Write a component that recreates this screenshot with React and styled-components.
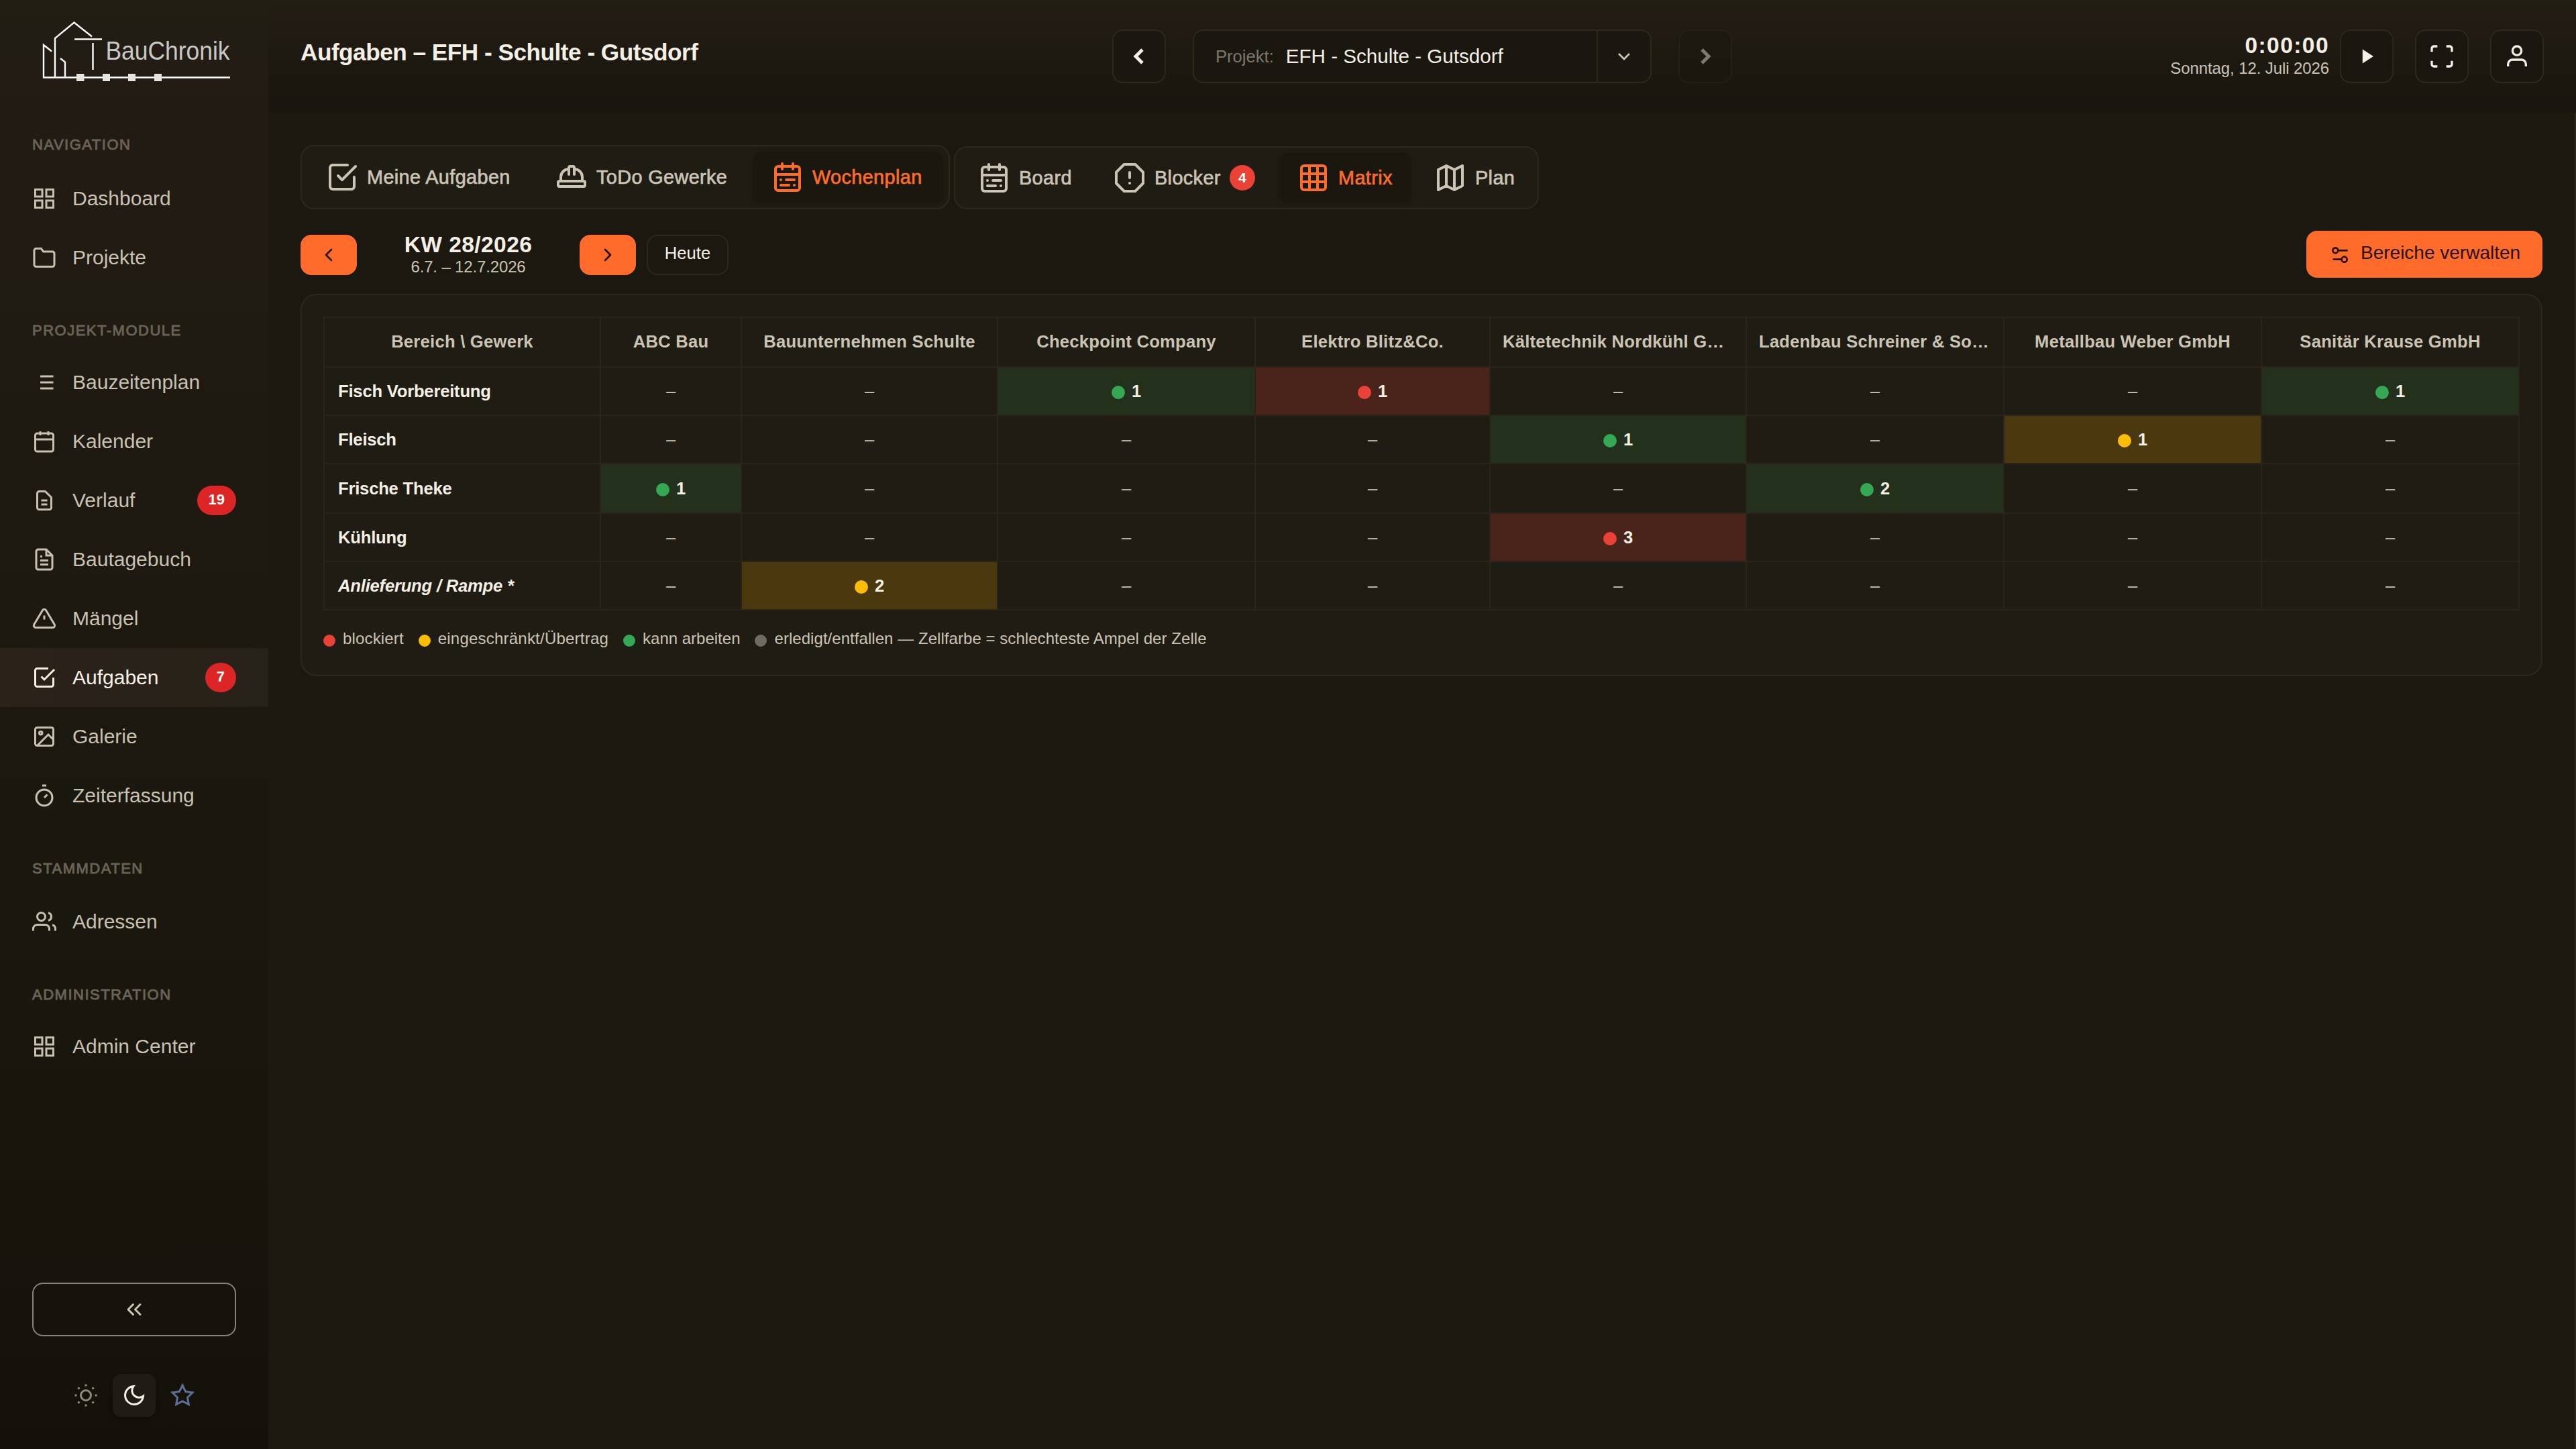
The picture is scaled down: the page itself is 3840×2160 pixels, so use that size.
import React from 'react'
import styled, { createGlobalStyle } from 'styled-components'

const GlobalStyle = createGlobalStyle`
  * { box-sizing: border-box; }
  body {
    margin: 0;
    background: #1b1810;
    color: #cbc4b5;
    font-family: "Liberation Sans", Arial, sans-serif;
    overflow: hidden;
  }
`

const ICONS = {
  grid: <><rect x="3" y="3" width="7" height="7" /><rect x="14" y="3" width="7" height="7" /><rect x="14" y="14" width="7" height="7" /><rect x="3" y="14" width="7" height="7" /></>,
  folder: <path d="M22 19a2 2 0 0 1-2 2H4a2 2 0 0 1-2-2V5a2 2 0 0 1 2-2h5l2 3h9a2 2 0 0 1 2 2z" />,
  list: <path d="M8 6h13M8 12h13M8 18h13" />,
  calendar: <><rect x="3" y="4" width="18" height="18" rx="2" /><path d="M16 2v4M8 2v4M3 10h18" /></>,
  doc: <path d="M9 12h6m-6 4h6m2 5H7a2 2 0 01-2-2V5a2 2 0 012-2h5.586a1 1 0 01.707.293l5.414 5.414a1 1 0 01.293.707V19a2 2 0 01-2 2z" />,
  fileText: <path d="M14 2H6a2 2 0 0 0-2 2v16a2 2 0 0 0 2 2h12a2 2 0 0 0 2-2V8zM14 2v6h6M16 13H8M16 17H8M10 9H8" />,
  alert: <path d="M10.29 3.86L1.82 18a2 2 0 0 0 1.71 3h16.94a2 2 0 0 0 1.71-3L13.71 3.86a2 2 0 0 0-3.42 0zM12 9v4" />,
  check: <path d="M9 11l3 3L22 4M21 12v7a2 2 0 0 1-2 2H5a2 2 0 0 1-2-2V5a2 2 0 0 1 2-2h11" />,
  image: <><rect x="3" y="3" width="18" height="18" rx="2" /><circle cx="8.5" cy="8.5" r="1.5" /><path d="M21 15l-5-5L5 21" /></>,
  timer: <><path d="M10 2h4M12 14l3-3" /><circle cx="12" cy="14" r="8" /></>,
  users: <><path d="M17 21v-2a4 4 0 0 0-4-4H5a4 4 0 0 0-4 4v2" /><circle cx="9" cy="7" r="4" /><path d="M23 21v-2a4 4 0 0 0-3-3.87M16 3.13a4 4 0 0 1 0 7.75" /></>,
  chevronsLeft: <path d="M11 17l-5-5 5-5M18 17l-5-5 5-5" />,
  sun: <><circle cx="12" cy="12" r="5" /><path d="M12 1v2M12 21v2M4.22 4.22l1.42 1.42M18.36 18.36l1.42 1.42M1 12h2M21 12h2M4.22 19.78l1.42-1.42M18.36 5.64l1.42-1.42" /></>,
  moon: <path d="M21 12.79A9 9 0 1 1 11.21 3 7 7 0 0 0 21 12.79z" />,
  star: <path d="M12 2l3.09 6.26L22 9.27l-5 4.87 1.18 6.88L12 17.77l-6.18 3.25L7 14.14 2 9.27l6.91-1.01z" />,
  left: <path d="M15 18l-6-6 6-6" />,
  right: <path d="M9 18l6-6-6-6" />,
  down: <path d="M6 9l6 6 6-6" />,
  play: <path d="M8.3 5.7v12.6L18 12z" fill="currentColor" stroke="none" />,
  maximize: <path d="M8 3H5a2 2 0 0 0-2 2v3M21 8V5a2 2 0 0 0-2-2h-3M16 21h3a2 2 0 0 0 2-2v-3M3 16v3a2 2 0 0 0 2 2h3" />,
  user: <><path d="M20 21v-2a4 4 0 0 0-4-4H8a4 4 0 0 0-4 4v2" /><circle cx="12" cy="7" r="4" /></>,
  hat: <path d="M2 18a1 1 0 0 0 1 1h18a1 1 0 0 0 1-1v-2a1 1 0 0 0-1-1H3a1 1 0 0 0-1 1zM10 10V5a1 1 0 0 1 1-1h2a1 1 0 0 1 1 1v5M4 15v-3a6 6 0 0 1 6-6M14 6a6 6 0 0 1 6 6v3" />,
  calendarRange: <><rect x="3" y="4" width="18" height="18" rx="2" /><path d="M16 2v4M8 2v4M3 10h18M17 14h-6M13 18H7M7 14h.01M17 18h.01" /></>,
  octagon: <path d="M7.86 2h8.28L22 7.86v8.28L16.14 22H7.86L2 16.14V7.86zM12 8v4M12 16h.01" />,
  matrix: <><rect x="3" y="3" width="18" height="18" rx="2" /><path d="M3 9h18M3 15h18M9 3v18M15 3v18" /></>,
  map: <path d="M3 6l6-3 6 3 6-3v15l-6 3-6-3-6 3zM9 3v15M15 6v15" />,
  settings: <><path d="M20 7h-9M14 17H5" /><circle cx="17" cy="17" r="3" /><circle cx="7" cy="7" r="3" /></>,
}

const Svg = styled.svg`
  display: block;
  flex: none;
  width: ${({ $size }) => $size}px;
  height: ${({ $size }) => $size}px;
  fill: none;
  stroke: currentColor;
`

const Icon = ({ name, size = 36, weight = 2, round }) => (
  <Svg
    viewBox="0 0 24 24"
    $size={size}
    strokeWidth={weight}
    strokeLinecap={round ? 'round' : 'butt'}
    strokeLinejoin={round ? 'round' : 'miter'}
  >
    {ICONS[name]}
  </Svg>
)

const Page = styled.div`
  display: flex;
  width: 3840px;
  height: 2160px;
`

const Sidebar = styled.aside`
  width: 400px;
  flex: none;
  display: flex;
  flex-direction: column;
  background: linear-gradient(180deg, #221e14 0%, #221b14 8%, #1e1a12 28%, #1a170e 65%, #15130b 92%, #14100a 100%);
`

const Logo = styled.svg`
  display: block;
  flex: none;
  width: 400px;
  height: 151px;
`

const Section = styled.div`
  height: ${({ $height }) => $height || 98}px;
  padding: 49px 0 0 48px;
  font-size: 22px;
  line-height: 32px;
  letter-spacing: 1.5px;
  color: #696355;
  -webkit-text-stroke: 0.9px #696355;
`

const NavItem = styled.div`
  height: 88px;
  display: flex;
  align-items: center;
  gap: 24px;
  padding: 0 48px;
  font-size: 30px;
  color: ${({ $active }) => $active ? '#f5f0e6' : '#c8c1b2'};
  background: ${({ $active }) => $active ? 'linear-gradient(90deg, #2b221a, #272219)' : 'none'};
`

const NavBadge = styled.span`
  margin-left: auto;
  height: 44px;
  padding: 0 17px;
  border-radius: 22px;
  background: #dc2626;
  color: #fff;
  font-size: 22px;
  font-weight: 700;
  line-height: 42px;
`

const Collapse = styled.div`
  margin: auto 48px 0;
  height: 80px;
  border: 2px solid #85837c;
  border-radius: 16px;
  display: flex;
  align-items: center;
  justify-content: center;
`

const Themes = styled.div`
  display: flex;
  justify-content: center;
  gap: 8px;
  margin: 56px 0 48px;
`

const ThemeButton = styled.div`
  width: 64px;
  height: 64px;
  border-radius: 12px;
  display: flex;
  align-items: center;
  justify-content: center;
  color: ${({ $color }) => $color};
  background: ${({ $active }) => $active ? '#1f1c15' : 'none'};
  box-shadow: ${({ $active }) => $active ? '0 2px 6px rgba(0,0,0,0.3)' : 'none'};
`

const Main = styled.main`
  flex: 1;
  min-width: 0;
  display: flex;
  flex-direction: column;
`

const Header = styled.header`
  height: 168px;
  flex: none;
  display: grid;
  grid-template-columns: 1fr 924px 1fr;
  align-items: start;
  padding: 44px 48px 0;
  background: linear-gradient(180deg, #221e13 0, #221b14 36px, #1e1a12 70px, #1b1810 110px, #19160f 168px);
`

const Title = styled.h1`
  margin: 14px 0 0;
  font-size: 35.2px;
  line-height: 40px;
  letter-spacing: -0.5px;
  color: #f5f0e6;
`

const ProjectNav = styled.div`
  display: flex;
  gap: 40px;
  height: 80px;
`

const Square = styled.div`
  width: 80px;
  height: 80px;
  flex: none;
  border: 2px solid #2c291c;
  border-radius: 16px;
  background: #19170f;
  color: #f5f0e6;
  display: flex;
  align-items: center;
  justify-content: center;
  opacity: ${({ $dim }) => $dim ? 0.45 : 1};
`

const Select = styled.div`
  flex: 1;
  display: flex;
  border: 2px solid #2c291c;
  border-radius: 16px;
  background: #19170f;
`

const SelectValue = styled.div`
  flex: 1;
  display: flex;
  align-items: center;
  padding-left: 32px;
  gap: 18px;
  font-size: 29.6px;
  color: #f5f0e6;
`

const SelectLabel = styled.span`
  font-size: 25.6px;
  color: #7c776a;
`

const SelectArrow = styled.div`
  width: 80px;
  border-left: 2px solid #2c291c;
  display: flex;
  align-items: center;
  justify-content: center;
`

const HeaderRight = styled.div`
  display: flex;
  justify-content: flex-end;
  gap: 32px;
`

const Clock = styled.div`
  margin-right: -16px;
  padding-top: 6px;
  text-align: right;
`

const Time = styled.div`
  font-size: 33.6px;
  font-weight: 700;
  line-height: 36px;
  letter-spacing: 1.4px;
  color: #f5f0e6;
`

const DateLine = styled.div`
  font-size: 24px;
  line-height: 32px;
  letter-spacing: -0.1px;
`

const Content = styled.div`
  flex: 1;
  padding: 48px 48px 0;
  border-right: 2px solid #2a2718;
`

const TabBars = styled.div`
  display: flex;
  align-items: flex-end;
  gap: 6px;
`

const TabBar = styled.div`
  display: flex;
  gap: 8px;
  height: ${({ $height }) => $height}px;
  padding: 8px;
  border: 2px solid #2c291b;
  border-radius: 20px;
  background: #1f1c13;
`

const Tab = styled.div`
  width: ${({ $width }) => $width}px;
  padding-left: ${({ $pad }) => $pad}px;
  display: flex;
  align-items: center;
  gap: 13px;
  border-radius: 12px;
  font-size: 28.8px;
  letter-spacing: 0.4px;
  white-space: nowrap;
  color: ${({ $active }) => $active ? '#ff6b2b' : '#cbc4b5'};
  background: ${({ $active }) => $active ? '#1a170f' : 'none'};
  box-shadow: ${({ $active }) => $active ? '0 2px 8px rgba(0,0,0,0.12)' : 'none'};
  -webkit-text-stroke: 0.7px currentColor;
`

const Count = styled.span`
  width: 38px;
  height: 38px;
  border-radius: 50%;
  background: #ea4335;
  color: #fff;
  font-size: 21px;
  font-weight: 700;
  line-height: 38px;
  text-align: center;
  letter-spacing: 0;
  -webkit-text-stroke: 0;
`

const WeekRow = styled.div`
  display: flex;
  align-items: center;
  gap: 16px;
  height: 70px;
  margin-top: 32px;
`

const WeekButton = styled.div`
  width: 84px;
  height: 60px;
  margin-top: 2px;
  border-radius: 16px;
  background: #ff6b2b;
  color: #241006;
  display: flex;
  align-items: center;
  justify-content: center;
`

const Week = styled.div`
  width: 300px;
  padding-top: 4px;
  text-align: center;
`

const WeekTitle = styled.div`
  font-size: 33.6px;
  font-weight: 700;
  line-height: 34px;
  letter-spacing: 0.4px;
  color: #f5f0e6;
`

const WeekRange = styled.div`
  font-size: 24px;
  line-height: 32px;
  letter-spacing: -0.15px;
`

const Today = styled.div`
  width: 122px;
  height: 60px;
  margin-top: 2px;
  border: 2px solid #2c291b;
  border-radius: 16px;
  font-size: 25.6px;
  line-height: 50px;
  text-align: center;
  color: #f5f0e6;
`

const Manage = styled.div`
  width: 352px;
  height: 70px;
  margin-left: auto;
  padding-left: 34px;
  border-radius: 16px;
  background: #ff6b2b;
  color: #2a1105;
  font-size: 28px;
  line-height: 66px;
  display: flex;
  gap: 15px;

  svg { margin-top: 20px; }
`

const Card = styled.div`
  height: 570px;
  margin-top: 24px;
  padding: 32px;
  border: 2px solid #2c291b;
  border-radius: 24px;
  background: #1f1c13;
`

const Matrix = styled.div`
  display: grid;
  grid-template-columns: 412px 210px 382px 384px 350px 382px 384px 384px 384px;
  grid-template-rows: 74px 72px 72px 74px 72px 72px;
  width: 3274px;
  border: solid #2b2419;
  border-width: 2px 0 0 2px;
`

const TONES = { green: '#22301c', red: '#4a231a', yellow: '#4a390f' }
const DOTS = { green: '#34a853', red: '#ea4335', yellow: '#fbbc04', grey: '#6f6b60' }

const Cell = styled.div`
  display: flex;
  align-items: center;
  justify-content: center;
  gap: 10px;
  border: solid #2b2419;
  border-width: 0 2px 2px 0;
  font-size: 25.6px;
  white-space: nowrap;
  background: ${({ $tone }) => TONES[$tone] || 'none'};
  color: ${({ $tone }) => $tone ? '#f5f0e6' : '#cbc4b5'};
  font-weight: ${({ $tone }) => $tone ? 700 : 400};
`

const HeadCell = styled(Cell)`
  justify-content: ${({ $cut }) => $cut ? 'flex-start' : 'center'};
  padding: 0 0 2px ${({ $cut }) => $cut ? 18 : 0}px;
  font-weight: 700;
  letter-spacing: 0.25px;
`

const RowHead = styled(Cell)`
  justify-content: flex-start;
  padding-left: 20px;
  font-weight: 700;
  font-style: ${({ $italic }) => $italic ? 'italic' : 'normal'};
  letter-spacing: -0.2px;
  color: #f5f0e6;
`

const Dot = styled.i`
  width: 20px;
  height: 20px;
  margin-top: 4px;
  border-radius: 50%;
  background: ${({ $tone }) => DOTS[$tone]};
`

const LegendDot = styled(Dot)`
  width: 18px;
  height: 18px;
  margin-top: 6px;
`

const Legend = styled.div`
  display: flex;
  gap: 22px;
  margin-top: 25px;
  font-size: 24px;
  line-height: 34px;
`

const LegendItem = styled.span`
  display: flex;
  align-items: center;
  gap: 11px;
  white-space: nowrap;
  letter-spacing: ${({ $spacing }) => $spacing || 0}px;
`

const NAV = [
  { section: 'NAVIGATION', height: 101 },
  { icon: 'grid', label: 'Dashboard' },
  { icon: 'folder', label: 'Projekte' },
  { section: 'PROJEKT-MODULE' },
  { icon: 'list', label: 'Bauzeitenplan' },
  { icon: 'calendar', label: 'Kalender' },
  { icon: 'doc', label: 'Verlauf', badge: 19 },
  { icon: 'fileText', label: 'Bautagebuch' },
  { icon: 'alert', label: 'Mängel' },
  { icon: 'check', label: 'Aufgaben', badge: 7, active: true },
  { icon: 'image', label: 'Galerie' },
  { icon: 'timer', label: 'Zeiterfassung' },
  { section: 'STAMMDATEN', height: 100 },
  { icon: 'users', label: 'Adressen' },
  { section: 'ADMINISTRATION' },
  { icon: 'grid', label: 'Admin Center' },
]

const TRADES = [
  'Bereich \\ Gewerk',
  'ABC Bau',
  'Bauunternehmen Schulte',
  'Checkpoint Company',
  'Elektro Blitz&Co.',
  'Kältetechnik Nordkühl G…',
  'Ladenbau Schreiner & So…',
  'Metallbau Weber GmbH',
  'Sanitär Krause GmbH',
]

const ROWS = [
  { name: 'Fisch Vorbereitung', cells: { 2: ['green', 1], 3: ['red', 1], 7: ['green', 1] } },
  { name: 'Fleisch', cells: { 4: ['green', 1], 6: ['yellow', 1] } },
  { name: 'Frische Theke', cells: { 0: ['green', 1], 5: ['green', 2] } },
  { name: 'Kühlung', cells: { 4: ['red', 3] } },
  { name: 'Anlieferung / Rampe *', italic: true, cells: { 1: ['yellow', 2] } },
]

const LEGEND = [
  { tone: 'red', label: 'blockiert', spacing: 0.15 },
  { tone: 'yellow', label: 'eingeschränkt/Übertrag', spacing: 0.22 },
  { tone: 'green', label: 'kann arbeiten' },
  { tone: 'grey', label: 'erledigt/entfallen — Zellfarbe = schlechteste Ampel der Zelle', spacing: 0.05 },
]

const BrandLogo = () => (
  <Logo viewBox="0 0 400 151">
    <g fill="none" stroke="#fff" strokeWidth="2.4">
      <path d="M77 76.5L65 67v48.5H343" />
      <path d="M82 115V57L110.500 33.500 137 54.500" />
      <path d="M90 87l7 5.500v23M111 58.500h41M138.500 64v40" />
    </g>
    <path d="M114 110h11.500v11h-11.500zM153 110h11v11h-11zM191 110h11v11h-11zM230 110h11v11h-11z" fill="#e6e4e1" />
    <text x="157.500" y="88.500" fontSize="39" fill="#c9c8c6" textLength="185" lengthAdjust="spacingAndGlyphs">BauChronik</text>
  </Logo>
)

const Nav = () => NAV.map(({ section, height, icon, label, badge, active }) => (
  section
    ? <Section key={section} $height={height}>{section}</Section>
    : (
      <NavItem key={label} $active={active}>
        <Icon name={icon} />
        {label}
        {badge && <NavBadge>{badge}</NavBadge>}
      </NavItem>
    )
))

const MatrixTable = () => (
  <Matrix>
    {TRADES.map(trade => <HeadCell key={trade} $cut={trade.endsWith('…')}>{trade}</HeadCell>)}
    {ROWS.map(({ name, italic, cells }) => (
      <React.Fragment key={name}>
        <RowHead $italic={italic}>{name}</RowHead>
        {TRADES.slice(1).map((trade, i) => {
          const [tone, count] = cells[i] || []
          return (
            <Cell key={trade} $tone={tone}>
              {tone ? <><Dot $tone={tone} />{count}</> : '–'}
            </Cell>
          )
        })}
      </React.Fragment>
    ))}
  </Matrix>
)

export default function App() {
  return (
    <Page>
      <GlobalStyle />
      <Sidebar>
        <BrandLogo />
        <Nav />
        <Collapse><Icon name="chevronsLeft" round /></Collapse>
        <Themes>
          <ThemeButton $color="#8f887c"><Icon name="sun" /></ThemeButton>
          <ThemeButton $color="#f5f0e6" $active><Icon name="moon" /></ThemeButton>
          <ThemeButton $color="#5c6f99"><Icon name="star" /></ThemeButton>
        </Themes>
      </Sidebar>
      <Main>
        <Header>
          <Title>Aufgaben – EFH - Schulte - Gutsdorf</Title>
          <ProjectNav>
            <Square><Icon name="left" size={40} weight={3} /></Square>
            <Select>
              <SelectValue>
                <SelectLabel>Projekt:</SelectLabel>
                EFH - Schulte - Gutsdorf
              </SelectValue>
              <SelectArrow><Icon name="down" size={32} /></SelectArrow>
            </Select>
            <Square $dim><Icon name="right" size={40} weight={3} /></Square>
          </ProjectNav>
          <HeaderRight>
            <Clock>
              <Time>0:00:00</Time>
              <DateLine>Sonntag, 12. Juli 2026</DateLine>
            </Clock>
            <Square><Icon name="play" size={40} /></Square>
            <Square><Icon name="maximize" size={40} /></Square>
            <Square><Icon name="user" size={40} /></Square>
          </HeaderRight>
        </Header>
        <Content>
          <TabBars>
            <TabBar $height={96}>
              <Tab $width={334} $pad={28}><Icon name="check" size={48} round />Meine Aufgaben</Tab>
              <Tab $width={314} $pad={28}><Icon name="hat" size={48} round />ToDo Gewerke</Tab>
              <Tab $width={284} $pad={28} $active><Icon name="calendarRange" size={48} round />Wochenplan</Tab>
            </TabBar>
            <TabBar $height={94}>
              <Tab $width={194} $pad={26}><Icon name="calendarRange" size={48} round />Board</Tab>
              <Tab $width={266} $pad={26}><Icon name="octagon" size={48} round />Blocker<Count>4</Count></Tab>
              <Tab $width={196} $pad={26} $active><Icon name="matrix" size={48} round />Matrix</Tab>
              <Tab $width={172} $pad={26}><Icon name="map" size={48} round />Plan</Tab>
            </TabBar>
          </TabBars>
          <WeekRow>
            <WeekButton><Icon name="left" size={32} round /></WeekButton>
            <Week>
              <WeekTitle>KW 28/2026</WeekTitle>
              <WeekRange>6.7. – 12.7.2026</WeekRange>
            </Week>
            <WeekButton><Icon name="right" size={32} round /></WeekButton>
            <Today>Heute</Today>
            <Manage><Icon name="settings" size={32} round />Bereiche verwalten</Manage>
          </WeekRow>
          <Card>
            <MatrixTable />
            <Legend>
              {LEGEND.map(({ tone, label, spacing }) => (
                <LegendItem key={tone} $spacing={spacing}><LegendDot $tone={tone} />{label}</LegendItem>
              ))}
            </Legend>
          </Card>
        </Content>
      </Main>
    </Page>
  )
}
